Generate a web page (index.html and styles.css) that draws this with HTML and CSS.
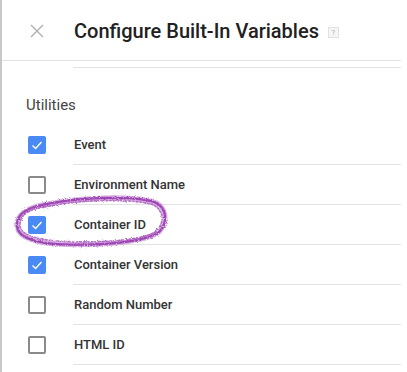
FILE: index.html
```html
<!DOCTYPE html>
<html lang="en">
<head>
    <meta charset="UTF-8">
    <title>Configure Built-In Variables</title>
    <link rel="stylesheet" href="styles.css">
</head>
<body>

<div class="panel">
    <div class="header">
        <svg class="close" width="14" height="14" viewBox="0 0 14 14">
            <path d="M1 1 L13 13 M13 1 L1 13" stroke="#b0b0b0" stroke-width="1.4" fill="none"/>
        </svg>
        <span class="title">Configure Built-In Variables</span>
        <span class="help">?</span>
    </div>

    <!-- 上一组的最后一行，只露出底线 -->
    <div class="prev-row"></div>

    <div class="group-title">Utilities</div>

    <div class="list">
        <div class="row">
            <span class="check on"><svg viewBox="0 0 18 18"><path d="M4.5 9.5 L7.6 12.4 L13.5 6" /></svg></span>
            <div class="label">Event</div>
        </div>
        <div class="row">
            <span class="check"></span>
            <div class="label">Environment Name</div>
        </div>
        <div class="row">
            <span class="check on"><svg viewBox="0 0 18 18"><path d="M4.5 9.5 L7.6 12.4 L13.5 6" /></svg></span>
            <div class="label">Container ID</div>
        </div>
        <div class="row">
            <span class="check on"><svg viewBox="0 0 18 18"><path d="M4.5 9.5 L7.6 12.4 L13.5 6" /></svg></span>
            <div class="label">Container Version</div>
        </div>
        <div class="row">
            <span class="check"></span>
            <div class="label">Random Number</div>
        </div>
        <div class="row">
            <span class="check"></span>
            <div class="label">HTML ID</div>
        </div>
    </div>

    <!-- 手画的紫色圈 -->
    <svg class="scribble" width="164" height="60" viewBox="0 0 164 60">
        <defs>
            <filter id="rough" x="-10%" y="-20%" width="120%" height="140%">
                <feTurbulence type="fractalNoise" baseFrequency="0.9" numOctaves="2" seed="3" result="noise"/>
                <feDisplacementMap in="SourceGraphic" in2="noise" scale="3"/>
            </filter>
        </defs>
        <g filter="url(#rough)" fill="none" stroke-linecap="round">
            <path d="M36 10 C70 3 118 2 140 7 C156 11 158 28 148 38 C132 50 76 52 44 50 C20 48 6 42 6 31 C6 19 18 13 36 10 Z"
                  stroke="#c690d4" stroke-width="5" opacity="0.7"/>
            <path d="M36 10 C70 3 118 2 140 7 C156 11 158 28 148 38 C132 50 76 52 44 50 C20 48 6 42 6 31 C6 19 18 13 36 10 Z"
                  stroke="#9e46b4" stroke-width="2.4" stroke-dasharray="1.6 1.4"/>
            <path d="M34 13 C70 5 120 5 140 10 C154 15 154 30 144 38 C128 48 76 49 46 47 C22 45 9 40 9 31 C9 21 18 15 34 13 Z"
                  stroke="#a651bb" stroke-width="1.6" stroke-dasharray="2 1.8" opacity="0.8"/>
        </g>
    </svg>
</div>

</body>
</html>
```

FILE: styles.css
```css
body, html {
    margin: 0;
    padding: 0;
    height: 100%;
    overflow: hidden;
    background-color: #fff;
}
body {
    font-family: Roboto, "Liberation Sans", Arial, sans-serif;
    color: #222;
}
.panel {
    position: relative;
    width: 399px;
    height: 100%;
    border-left: 2px solid #c8c8c8;
}
.header {
    display: flex;
    align-items: center;
    height: 61px;
    border-bottom: 1px solid #e3e3e3;
    box-sizing: border-box;
    padding-left: 28px;
    padding-top: 2px;
}
.close {
    display: block;
    margin-right: 30px;
}
.title {
    font-size: 20px;
    font-weight: 500;
    color: #212121;
}
.help {
    display: inline-flex;
    align-items: center;
    justify-content: center;
    width: 9px;
    height: 9px;
    margin-left: 9px;
    margin-top: 3px;
    border: 1px solid #e2e2e2;
    background-color: #f6f6f6;
    font-size: 7px;
    color: #aaa;
}
.prev-row {
    height: 6px;
    margin-left: 71px;
    border-bottom: 1px solid #e3e3e3;
}
.group-title {
    padding: 28px 0 0 24px;
    height: 29px;
    font-size: 15px;
    color: #444;
}
.row {
    display: flex;
    align-items: center;
    height: 40px;
}
.check {
    box-sizing: border-box;
    width: 18px;
    height: 18px;
    margin: 0 27px 0 26px;
    border: 2px solid #757575;
    border-radius: 2px;
    opacity: 0.85;
}
.check.on {
    border: none;
    background-color: #4a8af4;
    opacity: 1;
}
.check svg {
    display: block;
    width: 18px;
    height: 18px;
}
.check svg path {
    fill: none;
    stroke: #fff;
    stroke-width: 1.4;
}
.label {
    flex: 1;
    display: flex;
    align-items: center;
    height: 40px;
    box-sizing: border-box;
    padding-left: 1px;
    border-bottom: 1px solid #e3e3e3;
    font-size: 13px;
    font-weight: 500;
    color: #333;
}
.scribble {
    position: absolute;
    left: 9px;
    top: 194px;
}
```
